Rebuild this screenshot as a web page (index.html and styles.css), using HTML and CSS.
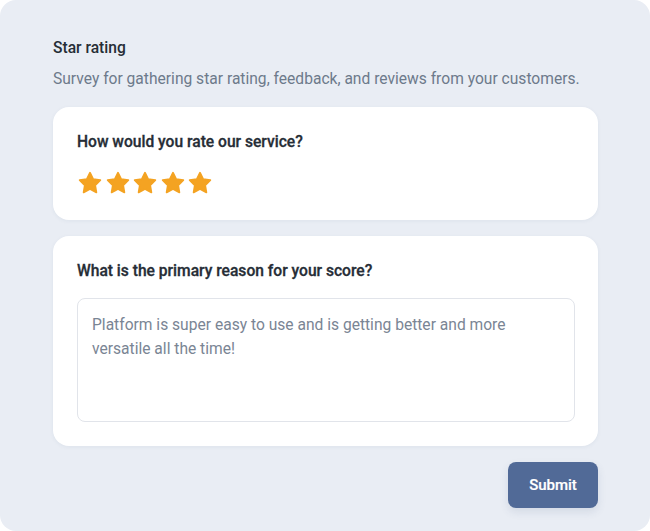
FILE: index.html
```html
<!DOCTYPE html>
<html>
<head>
<meta charset="utf-8">
<link rel="stylesheet" href="styles.css">
</head>
<body>
<div class="panel">
  <h1 class="title">Star rating</h1>
  <p class="subtitle">Survey for gathering star rating, feedback, and reviews from your customers.</p>
  <div class="card">
    <h2 class="question">How would you rate our service?</h2>
    <div class="stars">
      <svg class="star" viewBox="0 0 24 24"><path d="M12 2.5l2.95 5.98 6.6.96-4.78 4.65 1.13 6.57L12 17.56l-5.9 3.1 1.130-6.57-4.78-4.65 6.6-.96z"/></svg>
      <svg class="star" viewBox="0 0 24 24"><path d="M12 2.5l2.95 5.98 6.6.96-4.78 4.65 1.13 6.57L12 17.56l-5.9 3.1 1.13-6.57-4.78-4.65 6.6-.96z"/></svg>
      <svg class="star" viewBox="0 0 24 24"><path d="M12 2.5l2.95 5.98 6.6.96-4.78 4.65 1.13 6.57L12 17.56l-5.9 3.1 1.13-6.57-4.78-4.65 6.6-.96z"/></svg>
      <svg class="star" viewBox="0 0 24 24"><path d="M12 2.5l2.95 5.98 6.6.96-4.78 4.65 1.13 6.57L12 17.56l-5.9 3.1 1.13-6.57-4.78-4.65 6.6-.96z"/></svg>
      <svg class="star" viewBox="0 0 24 24"><path d="M12 2.5l2.95 5.98 6.6.96-4.78 4.65 1.13 6.57L12 17.56l-5.9 3.1 1.13-6.57-4.78-4.65 6.6-.96z"/></svg>
    </div>
  </div>
  <div class="card">
    <h2 class="question">What is the primary reason for your score?</h2>
    <div class="textbox">Platform is super easy to use and is getting better and more versatile all the time!</div>
  </div>
  <div class="actions">
    <button class="submit" type="button">Submit</button>
  </div>
</div>
</body>
</html>
```
FILE: styles.css
```css
html, body {
  margin: 0;
  padding: 0;
  background: #ffffff;
}
body {
  font-family: Roboto, "Liberation Sans", Arial, sans-serif;
}
.panel {
  box-sizing: border-box;
  width: 650px;
  height: 531px;
  background: #e9edf4;
  border-radius: 16px;
  padding: 38px 52px 0 53px;
}
.title {
  margin: 0;
  font-size: 15.6px;
  line-height: 20px;
  font-weight: 500;
  color: #262d36;
}
.subtitle {
  margin: 10px 0 17px;
  font-size: 15.6px;
  line-height: 22px;
  font-weight: 400;
  color: #6d7a8b;
}
.card {
  background: #ffffff;
  border-radius: 16px;
  padding: 24px 23px 24px 24px;
  box-shadow: 0 1px 4px rgba(40, 60, 100, 0.06);
}
.card + .card {
  margin-top: 16px;
}
.question {
  margin: 0;
  font-size: 15.6px;
  line-height: 22px;
  font-weight: 500;
  color: #262d36;
  -webkit-text-stroke: 0.3px #262d36;
}
.stars {
  display: flex;
  gap: 1.5px;
  margin-top: 17px;
}
.star {
  width: 26px;
  height: 26px;
  display: block;
}
.star path {
  fill: #f4a322;
  stroke: #f4a322;
  stroke-width: 1.6;
  stroke-linejoin: round;
}
.textbox {
  box-sizing: border-box;
  margin-top: 16px;
  height: 124px;
  border: 1px solid #e1e4ea;
  border-radius: 8px;
  padding: 14px 20px 0 14px;
  font-size: 15.6px;
  line-height: 24px;
  color: #7a8594;
}
.actions {
  display: flex;
  justify-content: flex-end;
  margin-top: 16px;
}
.submit {
  width: 90px;
  height: 46px;
  border: none;
  border-radius: 8px;
  background: #516a97;
  color: #ffffff;
  font-family: Roboto, "Liberation Sans", Arial, sans-serif;
  font-size: 15px;
  font-weight: 500;
  -webkit-text-stroke: 0.2px #ffffff;
  box-shadow: 0 4px 8px rgba(60, 80, 120, 0.12);
  cursor: pointer;
}
```
